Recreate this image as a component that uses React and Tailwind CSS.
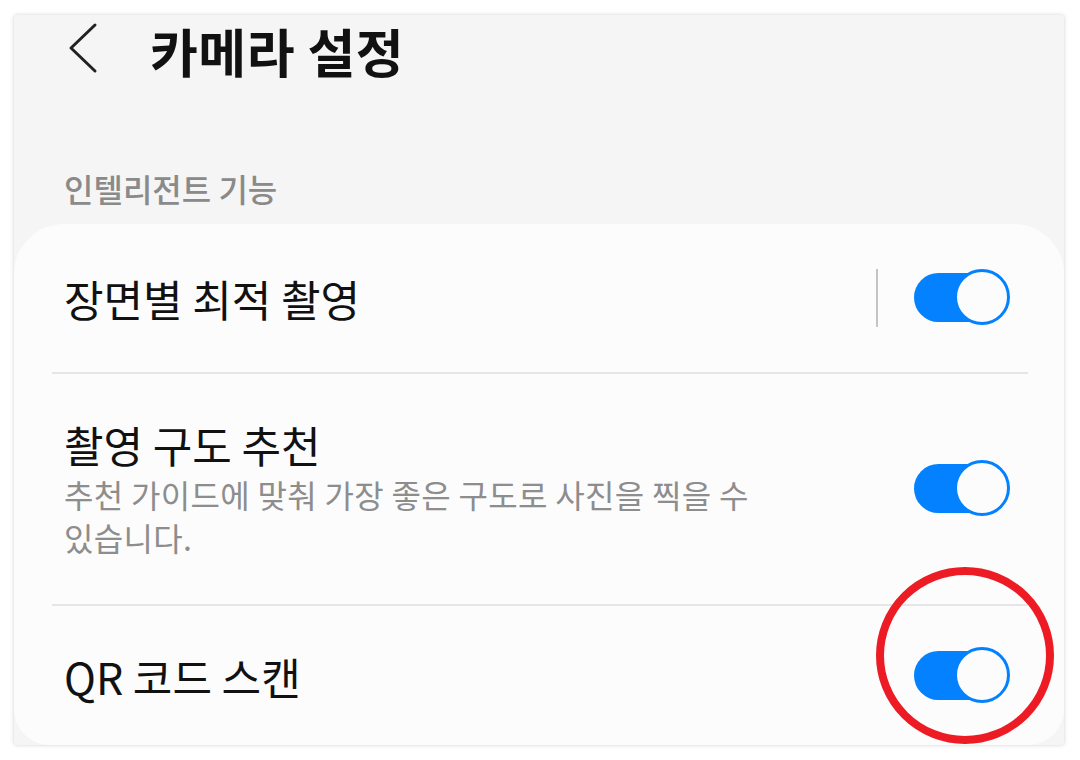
import React from "react";

const FONT = { fontFamily: '"Noto Sans CJK KR", "Noto Sans", sans-serif' };

function Toggle() {
  return (
    <div className="relative w-[96px] h-[58px] shrink-0">
      <div className="absolute left-0 top-[4px] w-[82px] h-[49px] rounded-full bg-[#0381fe]" />
      <div className="absolute right-0 top-0 w-[56px] h-[56px] rounded-full bg-[#fcfcfc] border-[3px] border-[#0381fe]" />
    </div>
  );
}

export default function App() {
  return (
    <div className="relative w-[1080px] h-[760px] bg-white pt-[15px] pl-[14px] pr-[16px] pb-[15px]" style={FONT}>
      <div className="flex flex-col h-full bg-[#f5f5f5] rounded-[3px] shadow-[0_0_4px_rgba(0,0,0,0.18)]">
        {/* Header */}
        <div className="flex items-center h-[72px] pl-[54px]">
          <svg width="30" height="52" viewBox="0 0 30 52" className="shrink-0 -mt-[6px]">
            <polyline points="27,3 3,26 27,49" fill="none" stroke="#222" strokeWidth="3" strokeLinecap="round" strokeLinejoin="round" />
          </svg>
          <h1 className="ml-[52px] pr-[8px] text-[52px] font-bold leading-[72px] tracking-[0.01em] text-[#111] whitespace-nowrap">
            카메라 설정
          </h1>
        </div>

        <div className="pt-[81px] pb-[16px] pl-[50px] text-[32px] leading-[40px] font-medium text-[#8a8a8a]">
          인텔리전트 기능
        </div>

        {/* Card */}
        <div className="flex-1 flex flex-col bg-[#fcfcfc] rounded-t-[50px] rounded-b-[36px]">
          <div className="flex items-center h-[148px] pl-[50px] pr-[54px]">
            <div className="flex-1 text-[43px] leading-[50px] text-[#111]">장면별 최적 촬영</div>
            <div className="w-[2px] h-[58px] bg-[#c4c4c4] mr-[36px]" />
            <Toggle />
          </div>
          <div className="h-[2px] bg-[#e6e6e6] ml-[38px] mr-[36px]" />

          <div className="flex items-center h-[230px] pl-[50px] pr-[54px]">
            <div className="flex-1 flex flex-col">
              <div className="text-[43px] leading-[50px] text-[#111]">촬영 구도 추천</div>
              <div className="mt-[4px] max-w-[730px] break-keep text-[32px] leading-[43px] tracking-[0.01em] text-[#8d8d8d]">
                추천 가이드에 맞춰 가장 좋은 구도로 사진을 찍을 수 있습니다.
              </div>
            </div>
            <Toggle />
          </div>
          <div className="h-[2px] bg-[#e6e6e6] ml-[38px] mr-[36px]" />

          <div className="flex-1 flex items-center pl-[50px] pr-[54px]">
            <div className="flex-1 text-[43px] leading-[50px] text-[#111]">QR 코드 스캔</div>
            <Toggle />
          </div>
        </div>
      </div>

      {/* Red annotation circle */}
      <svg className="absolute left-0 top-0 pointer-events-none" width="1080" height="760">
        <ellipse cx="965" cy="655.5" rx="85" ry="84.5" fill="none" stroke="#ed1c24" strokeWidth="8" />
      </svg>
    </div>
  );
}
